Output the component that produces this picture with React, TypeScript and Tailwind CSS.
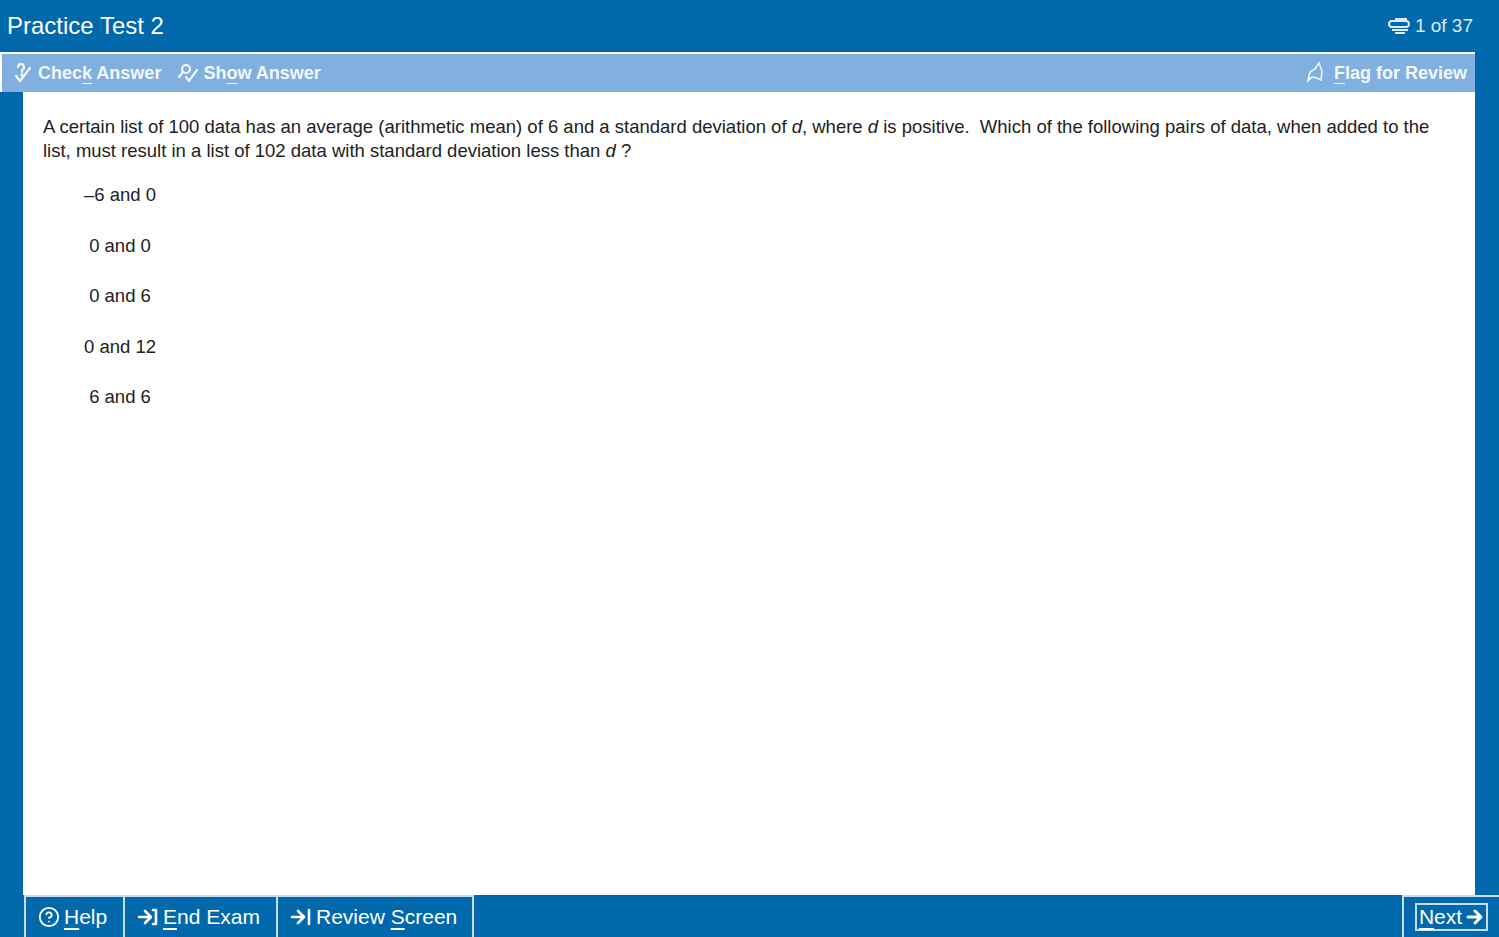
import { HelpCircle } from 'lucide-react'

const font = { fontFamily: '"Liberation Sans", "DejaVu Sans", sans-serif' }

function U({ children }: { children: string }) {
  return <span className="underline underline-offset-4">{children}</span>
}

function ArrowIn({ bracket }: { bracket: boolean }) {
  return (
    <svg width="22" height="20" viewBox="0 0 22 20" fill="none" stroke="currentColor" strokeWidth="2.6" strokeLinecap="round" strokeLinejoin="round">
      <path d="M2 10h11M8 4l6 6-6 6" />
      {bracket ? <path d="M16 3h3v14h-3" /> : <path d="M19 3v14" />}
    </svg>
  )
}

export default function App() {
  const choices = ['\u20136 and 0', '0 and 0', '0 and 6', '0 and 12', '6 and 6']
  return (
    <div className="flex h-[937px] w-[1499px] flex-col overflow-hidden bg-[#0169ab] text-white" style={font}>
      {/* header */}
      <div className="flex h-[52px] items-center justify-between pl-[7px] pr-[26px]">
        <span className="text-[24px]">Practice Test 2</span>
        <span className="flex items-center gap-1 text-[19px] text-[#dce9f5]">
          <svg width="24" height="18" viewBox="0 0 24 18" fill="none" stroke="currentColor" strokeWidth="2">
            <rect x="2" y="4" width="20" height="6" rx="3" />
            <line x1="5" y1="13" x2="21" y2="13" />
            <line x1="8" y1="16" x2="18" y2="16" />
            <line x1="8" y1="2" x2="20" y2="2" />
          </svg>
          <span>1 of 37</span>
        </span>
      </div>

      {/* toolbar + body */}
      <div className="mr-[24px] flex flex-1 flex-col border-t-2 border-white">
        <div className="flex h-[38px] items-center justify-between border-l-2 border-white bg-[#80afe0] pl-[10px] pr-[8px] text-[18px] font-bold text-[#f2f7fc]">
          <div className="flex items-center gap-4">
            <span className="flex items-center gap-1">
              <svg width="22" height="22" viewBox="0 0 22 22" fill="none" stroke="currentColor" strokeWidth="2.2" strokeLinecap="round">
                <path d="M6 5a3 3 0 1 1 4 3v2" />
                <circle cx="10" cy="13" r="0.6" fill="currentColor" />
                <path d="M4 14l4 5 10-13" />
              </svg>
              <span>Chec<U>k</U> Answer</span>
            </span>
            <span className="flex items-center gap-1">
              <svg width="22" height="22" viewBox="0 0 22 22" fill="none" stroke="currentColor" strokeWidth="2.2" strokeLinecap="round">
                <circle cx="9" cy="7" r="4" />
                <path d="M6 10l-4 5" />
                <path d="M9 15l3 4 8-11" />
              </svg>
              <span>Sh<U>o</U>w Answer</span>
            </span>
          </div>
          <span className="flex items-center gap-1">
            <svg width="24" height="24" viewBox="0 0 24 24" fill="none" stroke="currentColor" strokeWidth="1.5">
              <path d="M13 2l-4 6-5 3-2 9 4-4 5 1 4 2 1-9-3-8z" />
            </svg>
            <span><U>F</U>lag for Review</span>
          </span>
        </div>
        <div className="flex flex-1">
          <div className="w-[23px]" />
          <div className="flex-1 bg-white pl-[20px] pr-[44px] pt-[23px] text-[18.5px] leading-[24px] text-[#222]">
            <p>
              A certain list of 100 data has an average (arithmetic mean) of 6 and a standard deviation of <i>d</i>, where <i>d</i> is positive.&nbsp; Which of the following pairs of data, when added to the list, must result in a list of 102 data with standard deviation less than <i>d</i> ?
            </p>
            <div className="mt-[19px] flex flex-col pl-[22px]">
              {choices.map((c) => (
                <div key={c} className="flex h-[50.5px] w-[110px] items-start justify-center pt-[1px]">
                  {c}
                </div>
              ))}
            </div>
          </div>
        </div>
      </div>

      {/* bottom bar */}
      <div className="flex h-[42px] items-end bg-[#0169ab] pl-[24px] text-[21px]">
        <div className="flex h-full w-[99px] items-center gap-1 border-l-2 border-t-2 border-[#c9dced] pl-[12px]">
          <HelpCircle size={22} strokeWidth={2} />
          <span><U>H</U>elp</span>
        </div>
        <div className="flex h-full w-[153px] items-center gap-1 border-l-2 border-t-2 border-[#c9dced] pl-[12px]">
          <ArrowIn bracket />
          <span><U>E</U>nd Exam</span>
        </div>
        <div className="flex h-full w-[198px] items-center gap-1 border-x-2 border-t-2 border-[#c9dced] pl-[12px]">
          <ArrowIn bracket={false} />
          <span>Review <U>S</U>creen</span>
        </div>
        <div className="h-full flex-1" />
        <div className="flex h-full w-[97px] items-center justify-center border-l-2 border-t-2 border-[#c9dced]">
          <span className="flex items-center gap-1 border-2 border-[#c9dced] px-[2px] leading-[24px]">
            <span><U>N</U>ext</span>
            <svg width="18" height="18" viewBox="0 0 18 18" fill="none" stroke="currentColor" strokeWidth="3" strokeLinecap="round" strokeLinejoin="round">
              <path d="M2 9h13M9 3l6 6-6 6" />
            </svg>
          </span>
        </div>
      </div>
    </div>
  )
}
